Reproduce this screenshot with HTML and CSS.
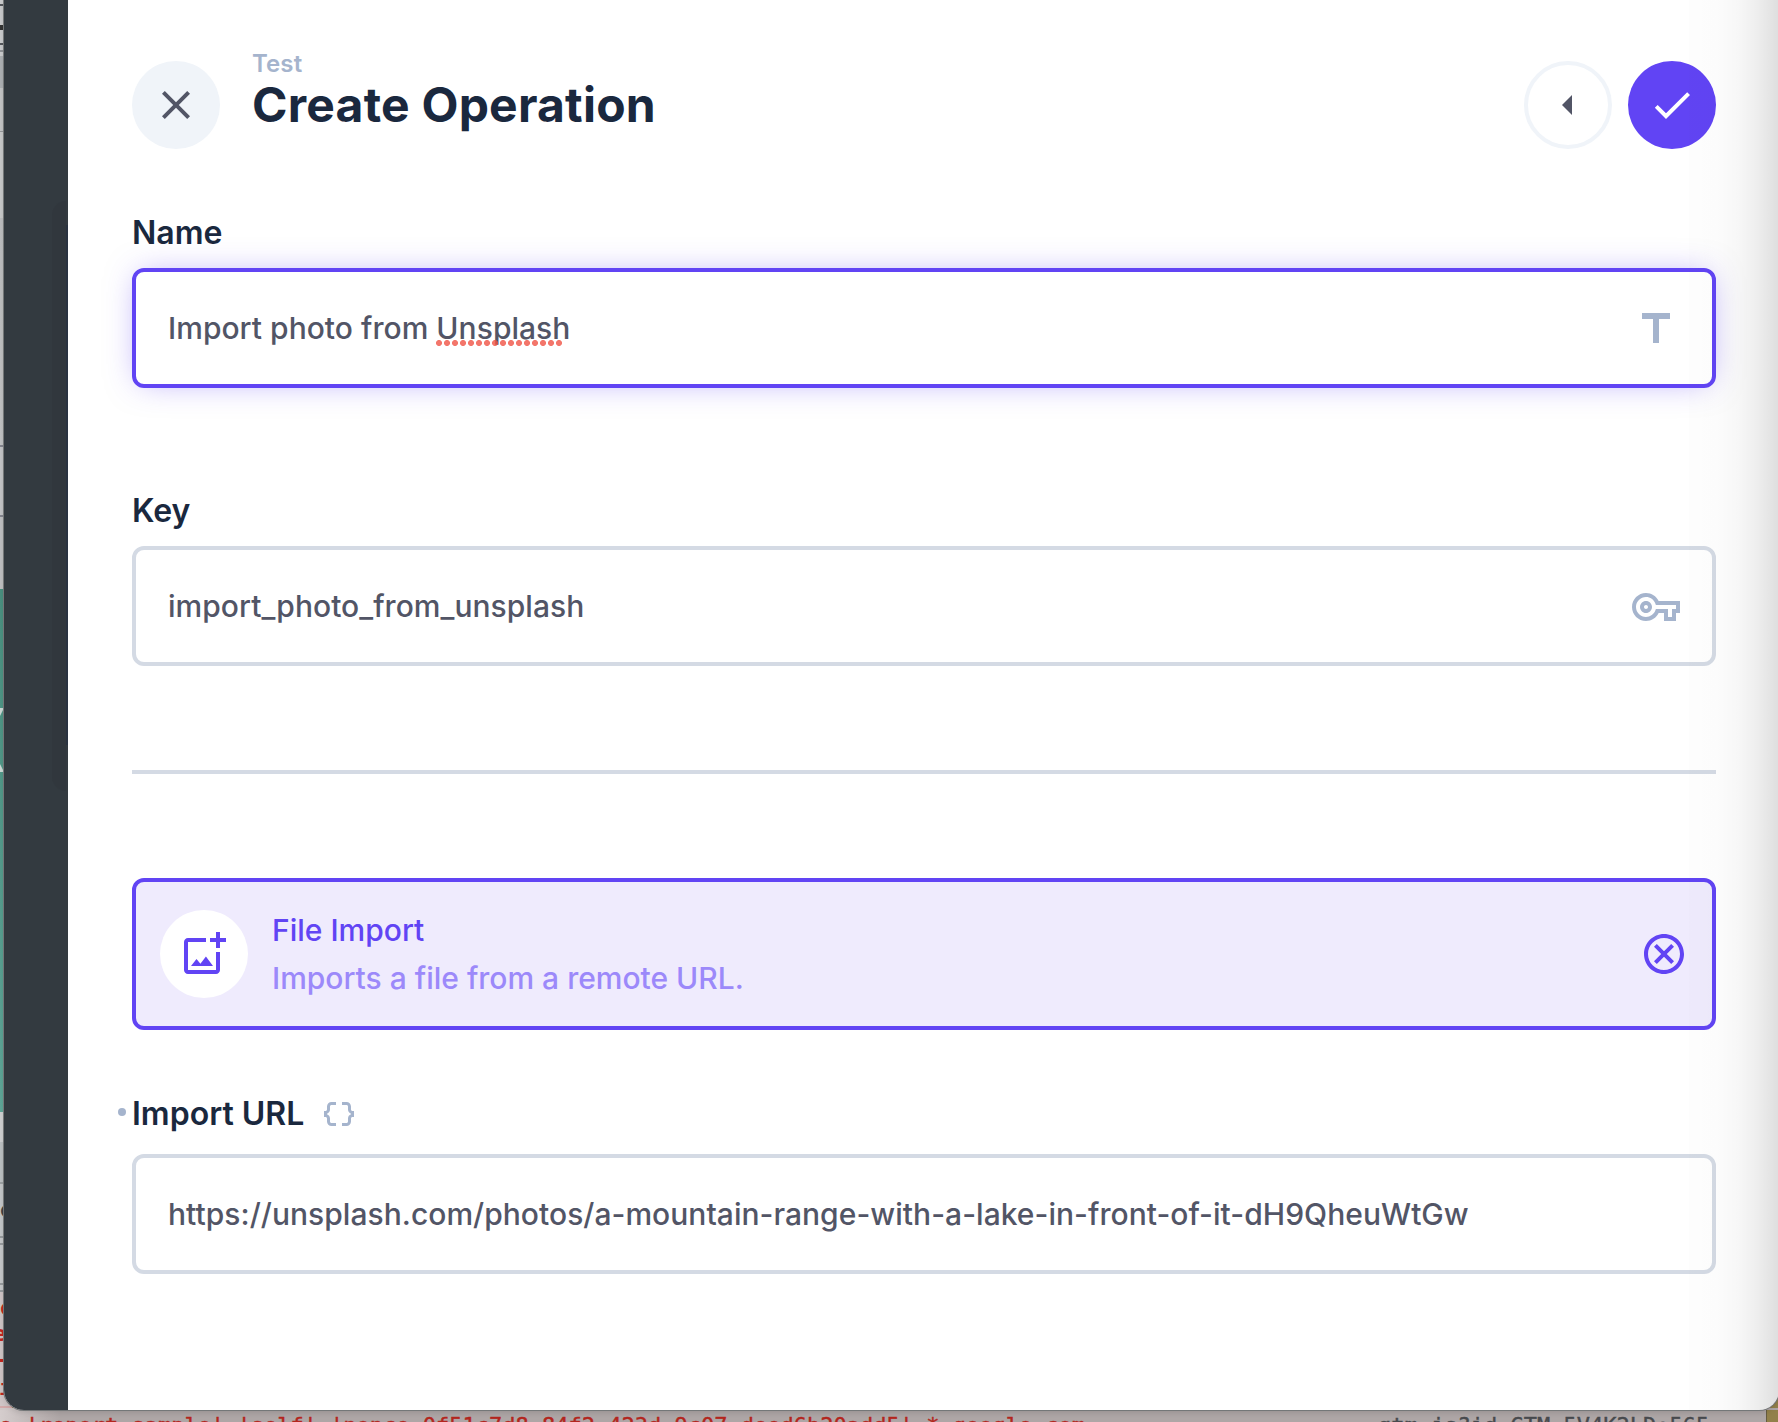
FILE: index.html
```html
<!DOCTYPE html>
<html lang="en">
<head>
<meta charset="utf-8">
<title>Create Operation</title>
<link rel="stylesheet" href="styles.css">
</head>
<body>
<div class="desktop">
  <div class="edge" aria-hidden="true">
    <span class="edge-tri edge-tri-top"></span>
    <span class="edge-tri edge-tri-bottom"></span>
    <span class="edge-text edge-dark">o</span>
    <span class="edge-text edge-red edge-r1">o</span>
    <span class="edge-text edge-red edge-r2">e</span>
    <span class="edge-text edge-red edge-r3">-</span>
    <span class="edge-text edge-red edge-r4">i</span>
  </div>
  <div class="behind">
    <span class="behind-policy">e 'report-sample' 'self' 'nonce-0f51c7d8-84f2-423d-9c07-deed6b20add5' *.google.com</span>
    <span class="behind-script">gtm.js?id=GTM-5V4K2LD:565</span>
  </div>
  <div class="window">
    <div class="rail"></div>
    <main class="drawer">
      <header class="header">
        <button class="round round-close" aria-label="Close"><svg class="icon" viewBox="0 0 24 24"><path d="M6.4 19 5 17.6 10.6 12 5 6.4 6.4 5 12 10.6 17.6 5 19 6.4 13.4 12 19 17.6 17.6 19 12 13.4Z"/></svg></button>
        <div class="titles">
          <div class="subtitle">Test</div>
          <h1 class="title">Create Operation</h1>
        </div>
        <div class="actions">
          <button class="round round-outline" aria-label="Collapse"><svg class="icon" viewBox="0 0 24 24"><path d="M14 7l-5 5 5 5V7z"/></svg></button>
          <button class="round round-primary" aria-label="Save"><svg class="icon" viewBox="0 0 24 24"><path d="M9 16.17L4.83 12l-1.42 1.41L9 19 21 7l-1.41-1.41z"/></svg></button>
        </div>
      </header>

      <section class="group group-name">
        <div class="label">Name</div>
        <div class="input input-focus">
          <span class="value">Import photo from <span class="misspelled">Unsplash</span></span>
          <svg class="icon icon-input" viewBox="0 0 24 24"><path d="M5 4v3h5.5v12h3V7H19V4z"/></svg>
        </div>
      </section>

      <section class="group group-key">
        <div class="label">Key</div>
        <div class="input">
          <span class="value">import_photo_from_unsplash</span>
          <svg class="icon icon-input" viewBox="0 0 24 24"><path d="M22 19h-6v-4h-2.68c-1.14 2.42-3.6 4-6.32 4-3.86 0-7-3.14-7-7s3.14-7 7-7c2.72 0 5.17 1.58 6.32 4H24v6h-2v4zm-4-2h2v-4h2v-2H11.94l-.23-.67C11.01 8.34 9.11 7 7 7c-2.76 0-5 2.24-5 5s2.24 5 5 5c2.11 0 4.01-1.34 4.71-3.33l.23-.67H18v4zM7 15c-1.65 0-3-1.35-3-3s1.35-3 3-3 3 1.35 3 3-1.35 3-3 3zm0-4c-.55 0-1 .45-1 1s.45 1 1 1 1-.45 1-1-.45-1-1-1z"/></svg>
        </div>
      </section>

      <hr class="divider">

      <section class="card">
        <div class="card-icon"><svg class="icon" viewBox="0 0 24 24"><path d="M18 20H4V6h9V4H4c-1.1 0-2 .9-2 2v14c0 1.1.9 2 2 2h14c1.1 0 2-.9 2-2v-9h-2v9zm-7.79-3.17l-1.96-2.36L5.5 18h11l-3.54-4.71zM20 4V1h-2v3h-3v2h3v3h2V6h3V4h-3z"/></svg></div>
        <div class="card-body">
          <div class="card-title">File Import</div>
          <div class="card-text">Imports a file from a remote URL.</div>
        </div>
        <svg class="icon" viewBox="0 0 24 24"><path d="M15.6 7L12 10.6 8.4 7 7 8.4l3.6 3.6L7 15.6 8.4 17l3.6-3.6 3.6 3.6 1.4-1.4-3.6-3.6L17 8.4 15.6 7zM12 2C6.47 2 2 6.47 2 12s4.47 10 10 10 10-4.47 10-10S17.53 2 12 2zm0 18c-4.41 0-8-3.59-8-8s3.59-8 8-8 8 3.59 8 8-3.59 8-8 8z"/></svg>
      </section>

      <section class="group group-url">
        <div class="label label-edited">Import URL
          <svg class="icon-raw" viewBox="0 0 24 24"><path d="M4 7v2c0 .55-.45 1-1 1H2v4h1c.55 0 1 .45 1 1v2c0 1.65 1.35 3 3 3h3v-2H7c-.55 0-1-.45-1-1v-2c0-1.3-.84-2.42-2-2.83v-.34C5.16 11.42 6 10.3 6 9V7c0-.55.45-1 1-1h3V4H7c-1.65 0-3 1.35-3 3zM21 10c-.55 0-1-.45-1-1V7c0-1.65-1.35-3-3-3h-3v2h3c.55 0 1 .45 1 1v2c0 1.3.84 2.42 2 2.83v.34c-1.16.41-2 1.52-2 2.83v2c0 .55-.45 1-1 1h-3v2h3c1.65 0 3-1.35 3-3v-2c0-.55.45-1 1-1h1v-4h-1z"/></svg>
        </div>
        <div class="input">
          <span class="value">https://unsplash.com/photos/a-mountain-range-with-a-lake-in-front-of-it-dH9QheuWtGw</span>
        </div>
      </section>
    </main>
    <div class="shade"></div>
  </div>
</div>
</body>
</html>
```

FILE: styles.css
```css
* { box-sizing: border-box; }

body {
  margin: 0;
  overflow: hidden;
  font-family: Inter, "Liberation Sans", sans-serif;
  font-weight: 500;
}

.desktop {
  position: relative;
  width: 1778px;
  height: 1422px;
  overflow: hidden;
  background: linear-gradient(90deg, #d5cdcd 0, #aea6a6 60px);
}

/* Sliver of the page visible left of the window */
.edge {
  position: absolute;
  left: 0;
  top: 0;
  width: 24px;
  height: 1410px;
  overflow: hidden;
  background: linear-gradient(180deg,
    #c9cacc 0 4px, #54575c 4px 6px, #c9cacc 6px 25px, #333 25px 30px, #cbccce 30px 43px, #54575c 43px 45px,
    #c9cacc 45px 50px, #909296 50px 52px, #cbccce 52px 56px, #aeb1b4 56px 88px, #c4c5c6 88px 131px,
    #96989b 131px 132px, #c8c9ca 132px 218px, #bcbdbf 218px, #c2c3c4 445px, #85868f 445px 447px,
    #c4c5c7 447px 515px, #85868f 515px 517px, #bfc0c2 517px 589px, #4a9080 589px, #5fa798 1112px,
    #d0d1d2 1112px 1142px, #bcc1c3 1142px 1182px, #9da2a4 1182px 1184px, #c4c7c9 1184px 1236px,
    #979b9e 1236px 1238px, #c6c8ca 1238px 1243px, #979b9e 1243px 1245px, #c6c8ca 1245px 1283px,
    #979b9e 1283px 1285px, #c6c8ca 1285px 1290px, #979b9e 1290px 1292px, #cfc5c6 1292px 1406px,
    #d3a9a9 1406px 1408px, #d0c7c7 1408px);
}

.edge-tri {
  position: absolute;
  left: 0;
  width: 4px;
  height: 8px;
  background: #cbdad6;
}
.edge-tri-top { top: 708px; clip-path: polygon(0 0, 100% 0, 0 100%); }
.edge-tri-bottom { top: 764px; clip-path: polygon(0 0, 100% 100%, 0 100%); }

.edge-text {
  position: absolute;
  font: bold 22px/26px "DejaVu Sans Mono", monospace;
}
.edge-dark { left: 0; top: 1197px; color: #3f4347; }
.edge-red { left: 0; color: #c3261e; }
.edge-r1 { top: 1295px; }
.edge-r2 { left: -7px; top: 1321px; }
.edge-r3 { left: -5px; top: 1347px; }
.edge-r4 { left: -1px; top: 1375px; }

/* Line of text peeking out under the window */
.behind {
  position: absolute;
  left: 0;
  top: 1410px;
  width: 1767px;
  height: 12px;
  overflow: hidden;
  border-right: 1px solid #665c40;
  box-shadow: 12px 0 0 #92804a, 12px -14px 0 #92804a;
  font: 22px/26px "DejaVu Sans Mono", monospace;
  white-space: pre;
}
.behind-policy, .behind-script { position: absolute; top: 3px; -webkit-text-stroke: .4px; }
.behind-policy { left: -1px; color: #b3261e; }
.behind-script { left: 1378px; color: #484a4e; }

.window {
  position: absolute;
  left: 4px;
  top: 0;
  width: 1775px;
  height: 1410px;
  display: flex;
  overflow: hidden;
  border-radius: 0 0 20px 20px;
  background: #fff;
  box-shadow: 0 0 0 1px #747778, 0 2px 6px rgba(0, 0, 0, .15);
}

.rail {
  flex: none;
  width: 64px;
  background:
    linear-gradient(#2a3341, #2a3341) 62px 225px / 2px 520px no-repeat,
    #333a40;
  position: relative;
}
.rail::after {
  content: "";
  position: absolute;
  left: 48px;
  top: 201px;
  width: 14px;
  height: 590px;
  border-radius: 14px 0 0 14px;
  background: rgba(45, 52, 56, .35);
}

.drawer {
  flex: 1;
  padding: 61px 63px 0 64px;
}

.shade {
  position: absolute;
  right: 0;
  top: 0;
  width: 90px;
  height: 100%;
  background: linear-gradient(90deg, rgba(0, 0, 0, .006), rgba(0, 0, 0, .012) 30%, rgba(0, 0, 0, .03) 55%, rgba(0, 0, 0, .065) 75%, rgba(0, 0, 0, .13));
  pointer-events: none;
}

.icon {
  flex: none;
  width: 48px;
  height: 48px;
  fill: currentColor;
}

.header { display: flex; height: 88px; }

.round {
  display: flex;
  align-items: center;
  justify-content: center;
  width: 88px;
  height: 88px;
  padding: 0;
  border: 0;
  border-radius: 50%;
  color: #525566;
}
.round-close { background: #f0f4f9; }
.round-outline { border: 4px solid #f0f4f9; background: transparent; }
.round-primary { background: #6144f4; color: #fff; }

.titles { margin: -11px 0 0 32px; }
.subtitle {
  color: #a5b4cd;
  font-size: 24px;
  font-weight: 600;
  letter-spacing: .1px;
  line-height: 28px;
}
.title {
  margin: -1px 0 0;
  color: #1a283e;
  font-size: 48px;
  font-weight: 700;
  letter-spacing: .22px;
  line-height: 56px;
}
.actions { display: flex; gap: 16px; margin-left: auto; }

.group { display: flex; flex-direction: column; gap: 13px; }
.group-name { margin-top: 62px; }
.group-key { margin-top: 101px; }
.group-url { margin-top: 62px; gap: 18px; }

.label {
  position: relative;
  display: flex;
  align-items: center;
  gap: 17px;
  height: 44px;
  color: #1a283e;
  font-size: 32px;
  font-weight: 600;
  line-height: 44px;
}
.label-edited::before {
  content: "";
  position: absolute;
  left: -14px;
  top: 16px;
  width: 8px;
  height: 8px;
  border-radius: 50%;
  background: #a5b4cd;
}
.icon-raw { width: 36px; height: 36px; fill: #a5b4cd; }

.input {
  display: flex;
  align-items: center;
  justify-content: space-between;
  height: 120px;
  padding: 0 32px;
  border: 4px solid #d4dae4;
  border-radius: 12px;
  color: #525566;
  font-size: 30px;
  letter-spacing: .035px;
}
.input-focus {
  border-color: #6144f4;
  box-shadow: 0 0 32px -8px rgba(97, 68, 244, .5);
}
.icon-input { color: #a5b4cd; margin-top: 2px; }

.misspelled { position: relative; }
.misspelled::after {
  content: "";
  position: absolute;
  left: 0;
  bottom: 0;
  width: 128px;
  height: 6px;
  background: radial-gradient(circle at 3px 3px, rgba(240, 84, 70, .8) 2.6px, transparent 3.4px) 0 0 / 8px 6px repeat-x;
}

.divider {
  height: 4px;
  margin: 104px 0;
  border: 0;
  background: #d4dae4;
}

.card {
  display: flex;
  align-items: center;
  height: 152px;
  padding: 0 24px;
  border: 4px solid #6144f4;
  border-radius: 12px;
  background: #efebfd;
  color: #6144f4;
  font-size: 30px;
  line-height: 48px;
}
.card-icon {
  display: flex;
  align-items: center;
  justify-content: center;
  width: 88px;
  height: 88px;
  border-radius: 50%;
  background: #fff;
}
.card-body { flex: 1; margin-left: 24px; }
.card-text { color: #9c89fa; }
```
